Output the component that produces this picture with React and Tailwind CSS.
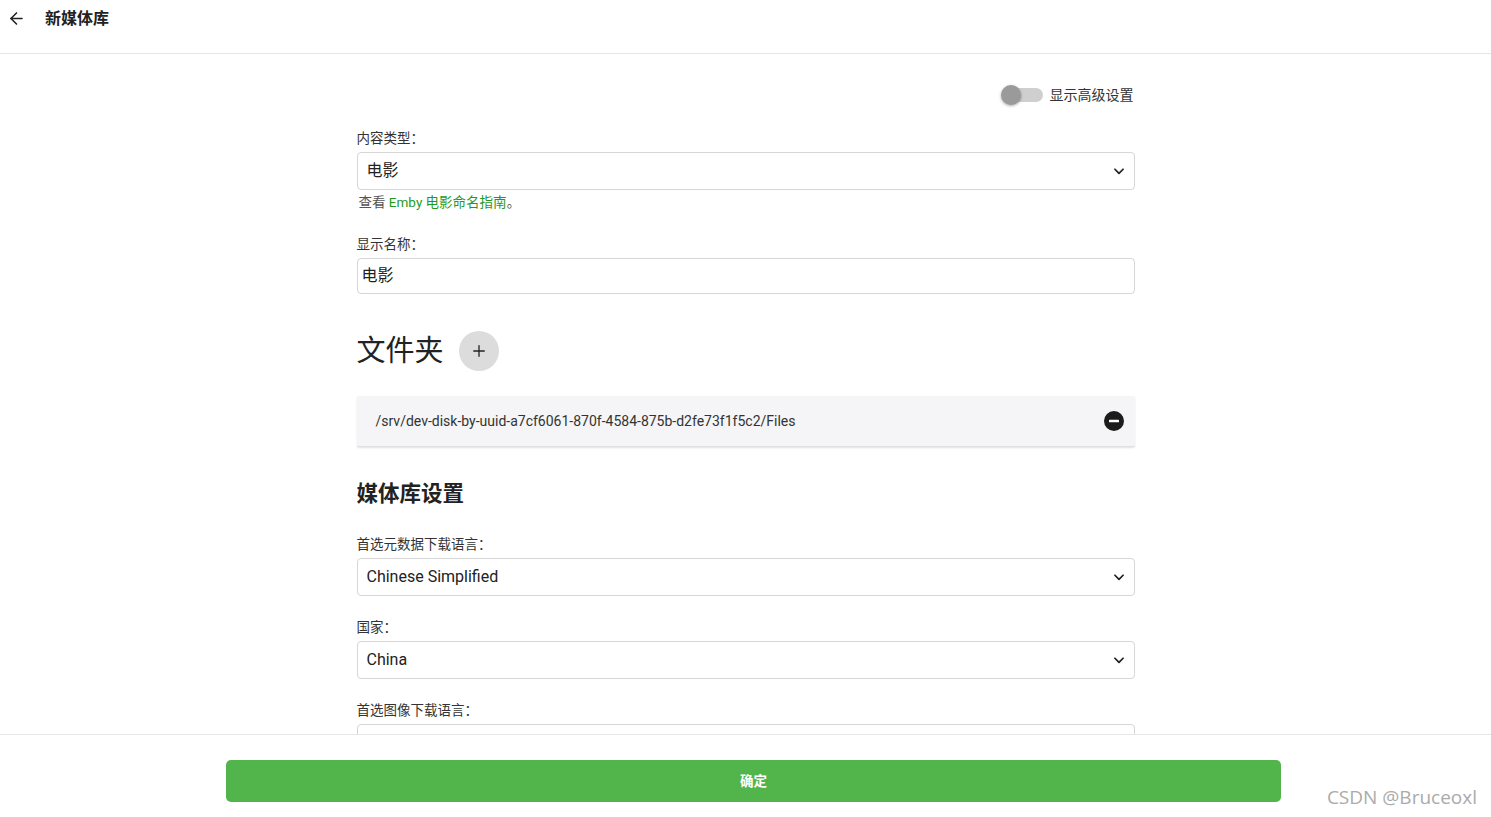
import React from 'react';
import { ArrowLeft, Plus } from 'lucide-react';

const FONT = { fontFamily: 'Roboto, "Noto Sans CJK SC", sans-serif' };

const Chevron = () => (
  <svg width="14" height="14" viewBox="0 0 24 24" className="text-[#222]">
    <path d="M5 9l7 7 7-7" fill="none" stroke="currentColor" strokeWidth="3" strokeLinecap="round" strokeLinejoin="round" />
  </svg>
);

const Label = ({ children }) => (
  <div className="text-[13.5px] leading-5 text-[#333] mb-1">{children}</div>
);

const Select = ({ value }) => (
  <div className="h-[38px] border border-[#d6d6d6] rounded-[4px] flex items-center justify-between pl-[9px] pr-[8px] bg-white">
    <span className="text-[16px] text-[#222]">{value}</span>
    <Chevron />
  </div>
);

export default function App() {
  return (
    <div className="h-[817px] w-full flex flex-col bg-white relative overflow-hidden" style={FONT}>
      {/* Header */}
      <div className="h-[54px] shrink-0 border-b border-[#e6e6e6] flex items-start pt-[8px]">
        <button className="pl-[7px] pr-[19px] py-[1px] text-[#222]">
          <ArrowLeft size={19} strokeWidth={2} />
        </button>
        <h1 className="text-[16px] font-bold text-[#222] leading-5 pt-[1px]">新媒体库</h1>
      </div>

      {/* Body */}
      <div className="flex-1 overflow-hidden">
        <div className="w-[778px] mx-auto pt-[31px]">
          <div className="flex justify-end items-center gap-[7px] h-5">
            <div className="relative w-[42px] h-5 flex items-center">
              <div className="absolute left-[4px] right-0 h-[14px] rounded-full bg-[#cfcfcf]" />
              <div className="absolute left-0 w-5 h-5 rounded-full bg-[#9a9a9a] shadow-[0_1px_3px_rgba(0,0,0,0.35)]" />
            </div>
            <span className="text-[14px] text-[#333] pr-[1px]">显示高级设置</span>
          </div>

          <div className="mt-[23px]">
            <Label>内容类型：</Label>
            <Select value="电影" />
            <div className="mt-[3px] pl-[2px] text-[13.5px] leading-[18px] text-[#555]">
              查看 <span className="text-[#1f9a1f]">Emby 电影命名指南</span>。
            </div>
          </div>

          <div className="mt-[23px]">
            <Label>显示名称：</Label>
            <div className="h-[36px] border border-[#d6d6d6] rounded-[4px] flex items-center pl-[4px]">
              <span className="text-[16px] text-[#222]">电影</span>
            </div>
          </div>

          <div className="mt-[37px] flex items-center h-10 gap-[15px]">
            <h2 className="text-[29px] text-[#222] leading-10">文件夹</h2>
            <button className="w-10 h-10 rounded-full bg-[#dcdcdc] flex items-center justify-center text-[#222]">
              <Plus size={18} strokeWidth={1.75} />
            </button>
          </div>

          <div className="mt-[25px] h-[51px] bg-[#f5f5f7] rounded-[2px] border-b border-[#e0e0e0] shadow-[0_1px_2px_rgba(0,0,0,0.12)] flex items-center justify-between pl-[19px] pr-[11px]">
            <span className="text-[14px] text-[#333]">/srv/dev-disk-by-uuid-a7cf6061-870f-4584-875b-d2fe73f1f5c2/Files</span>
            <svg width="20" height="20" viewBox="0 0 20 20">
              <circle cx="10" cy="10" r="10" fill="#1c1c1c" />
              <rect x="5" y="8.75" width="10" height="2.5" rx="0.5" fill="#fff" />
            </svg>
          </div>

          <h2 className="mt-[32px] text-[21.5px] font-bold text-[#222] leading-[30px]">媒体库设置</h2>

          <div className="mt-[25px]">
            <Label>首选元数据下载语言：</Label>
            <Select value="Chinese Simplified" />
          </div>

          <div className="mt-[21px]">
            <Label>国家：</Label>
            <Select value="China" />
          </div>

          <div className="mt-[21px]">
            <Label>首选图像下载语言：</Label>
            <Select value="" />
          </div>
        </div>
      </div>

      {/* Footer */}
      <div className="h-[83px] shrink-0 border-t border-[#e6e6e6] pt-[25px] bg-white">
        <button className="ml-[226px] w-[1055px] h-[42px] rounded-[5px] bg-[#52b54b] text-white text-[13.5px] font-bold">
          确定
        </button>
      </div>

      <div className="absolute right-[14px] bottom-[6px] text-[19px] text-[#ababab]" style={{ fontFamily: '"Open Sans", sans-serif' }}>
        CSDN @Bruceoxl
      </div>
    </div>
  );
}
